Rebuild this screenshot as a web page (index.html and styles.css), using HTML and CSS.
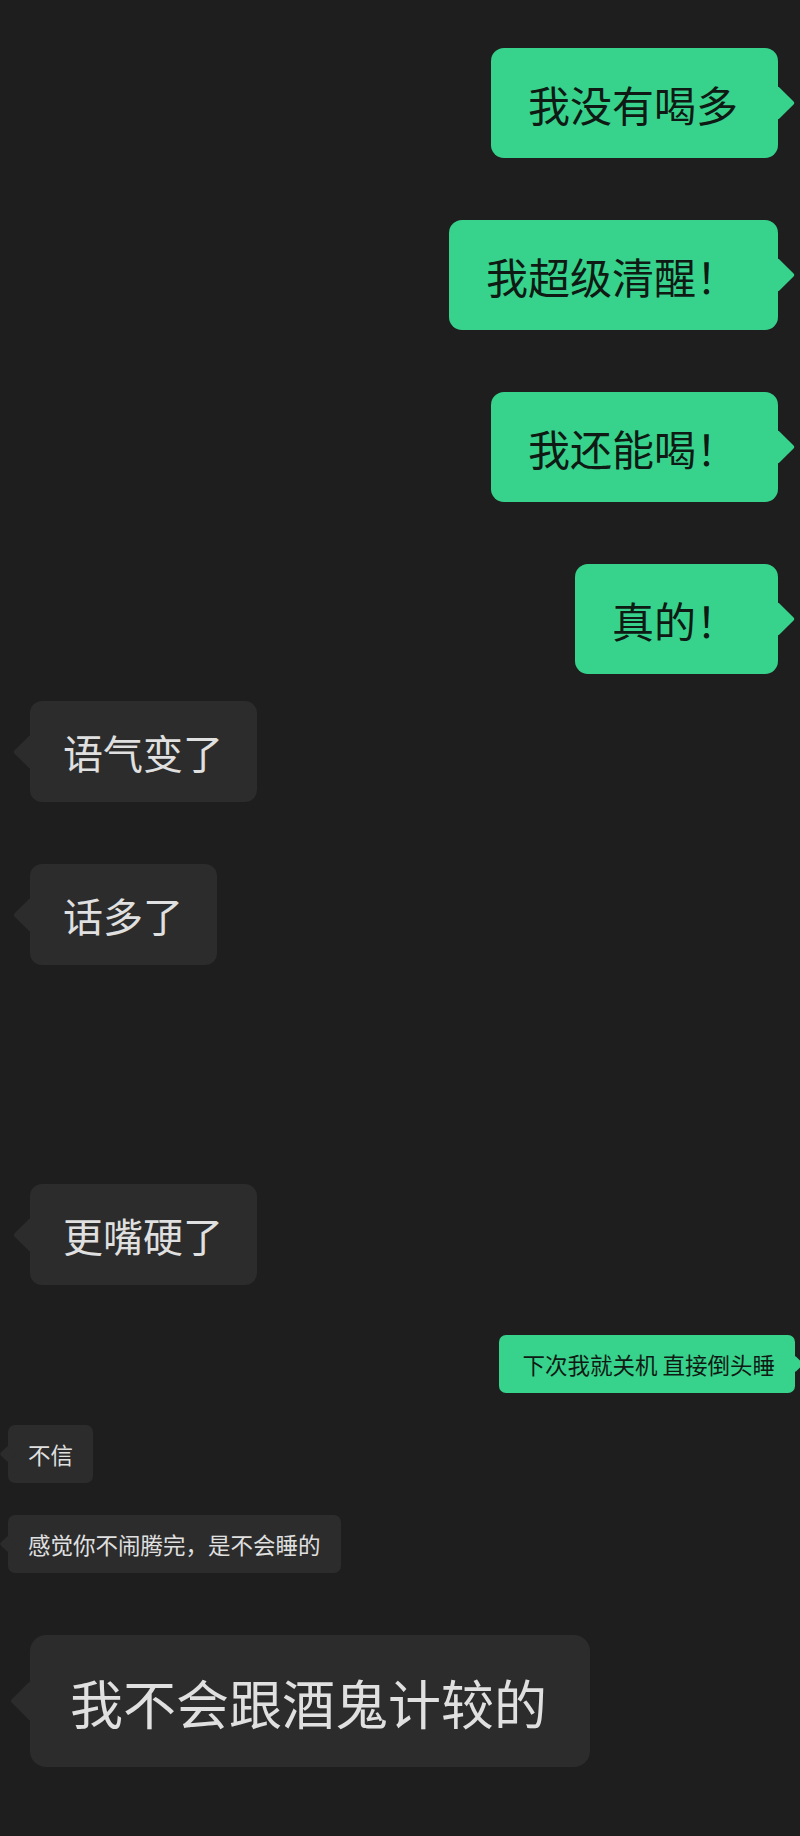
FILE: index.html
```html
<!DOCTYPE html>
<html lang="zh-CN">
<head>
    <meta charset="UTF-8">
    <meta name="viewport" content="width=device-width, initial-scale=1.0">
    <title>聊天记录</title>
    <link rel="stylesheet" href="styles.css">
</head>
<body>
    <div class="chat">
        <div class="msg me">我没有喝多</div>
        <div class="msg me">我超级清醒！</div>
        <div class="msg me">我还能喝！</div>
        <div class="msg me">真的！</div>

        <div class="msg them near">语气变了</div>
        <div class="msg them">话多了</div>
        <div class="msg them far">更嘴硬了</div>

        <!-- the bottom part is a smaller screenshot -->
        <div class="msg me small mid">下次我就关机 直接倒头睡</div>
        <div class="msg them small tight">不信</div>
        <div class="msg them small tight">感觉你不闹腾完，是不会睡的</div>

        <div class="msg them big">我不会跟酒鬼计较的</div>
    </div>
</body>
</html>
```

FILE: styles.css
```css
body {
    margin: 0;
    background-color: #1e1e1e;
    font-family: "Noto Sans CJK SC", "Noto Sans", sans-serif;
}
.chat {
    display: flex;
    flex-direction: column;
    padding: 48px 0 60px;
}
.msg {
    position: relative;
    white-space: nowrap;
    margin-top: 62px;
}
.msg:first-child {
    margin-top: 0;
}
/* little pointer on the side of each bubble */
.msg::after {
    content: "";
    position: absolute;
    top: 50%;
    width: 24px;
    height: 24px;
    margin-top: -12px;
    transform: rotate(45deg);
    border-radius: 2px;
    background-color: inherit;
}

.me {
    align-self: flex-end;
    margin-right: 22px;
    padding: 29px 40px 27px 37px;
    line-height: 54px;
    font-size: 42px;
    color: #0e1a13;
    background-color: #37d38c;
    border-radius: 13px;
}
.me::after {
    right: -12px;
}
.them {
    align-self: flex-start;
    margin-left: 30px;
    padding: 25px 34px 23px 33px;
    line-height: 53px;
    font-size: 40px;
    color: #e0e0e0;
    background-color: #2c2c2c;
    border-radius: 12px;
}
.them::after {
    left: -12px;
}

.small {
    padding: 14px 20px;
    line-height: 30px;
    font-size: 22.5px;
    border-radius: 7px;
}
.small::after {
    width: 12px;
    height: 12px;
    margin-top: -6px;
}
.me.small {
    margin-right: 5px;
    padding-left: 23px;
}
.me.small::after {
    right: -6px;
}
.them.small {
    margin-left: 8px;
}
.them.small::after {
    left: -6px;
}

.big {
    padding: 33px 43px 31px 40px;
    line-height: 68px;
    font-size: 53px;
    border-radius: 16px;
}
.big::after {
    width: 28px;
    height: 28px;
    margin-top: -14px;
    left: -14px;
}

/* gaps between the stitched screenshots */
.near {
    margin-top: 27px;
}
.tight {
    margin-top: 32px;
}
.mid {
    margin-top: 50px;
}
.far {
    margin-top: 219px;
}
```
